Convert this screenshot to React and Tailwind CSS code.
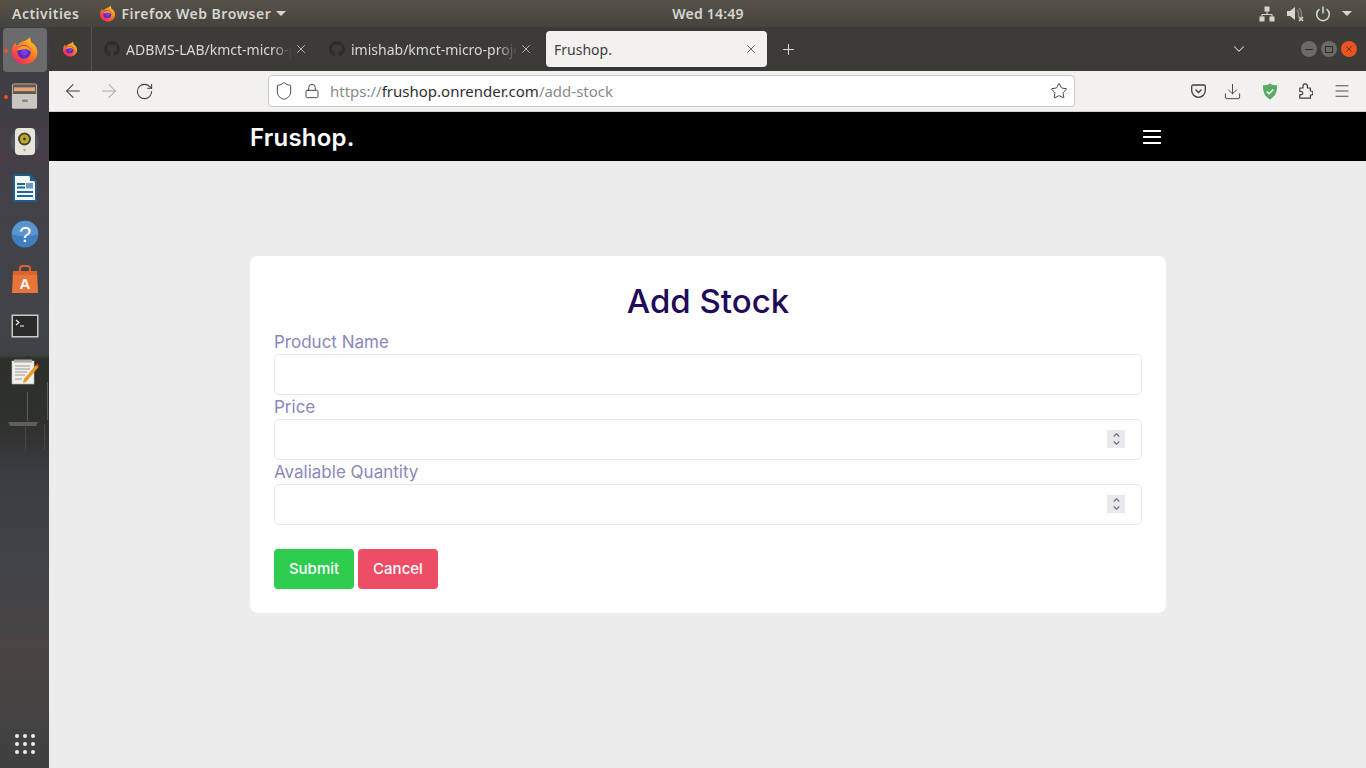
import React from "react";
import { ArrowLeft, ArrowRight, RotateCw, Shield, Lock, Star, Download, Menu, X, Plus, ChevronDown, ChevronUp } from "lucide-react";
import { FaGithub } from "react-icons/fa";

const Firefox = ({ s = 16 }) => (
  <svg width={s} height={s} viewBox="0 0 32 32">
    <defs>
      <linearGradient id="ffa" x1="0.8" y1="0.1" x2="0.2" y2="0.95">
        <stop offset="0" stopColor="#ffc21f" />
        <stop offset="0.45" stopColor="#ff7a1f" />
        <stop offset="1" stopColor="#f5236a" />
      </linearGradient>
    </defs>
    <path d="M22 1c1 3 0 5 3 7 4 3 6 7 5 12-1 7-7 11-14 11C8 31 2 25 2 17c0-4 2-8 4-10 0 2 1 3 2 4 1-2 3-4 6-5 3-1 6-2 8-5z" fill="url(#ffa)" />
    <circle cx="15.500" cy="17.500" r="7.500" fill="#5b2bc4" />
    <path d="M8 16c1-4 6-6 10-5 3 1 5 4 5 7-2-3-5-4-8-3-3 0-5 1-7 1z" fill="#ff9a1f" />
    <circle cx="16" cy="18" r="3.500" fill="#7b3fe0" />
  </svg>
);

const Spinner = () => (
  <div className="absolute right-[17px] top-[11px] w-[18px] h-[18px] bg-[#e9e9ed] flex flex-col items-center justify-center text-[#6f6f82]">
    <ChevronUp size={11} strokeWidth={2.6} className="-mb-[1px]" />
    <ChevronDown size={11} strokeWidth={2.6} className="-mt-[1px]" />
  </div>
);

const Field = ({ label, spin }) => (
  <div className="flex flex-col">
    <label className="text-[17px] leading-[24px] h-6 text-[#8b87bd]">{label}</label>
    <div className="relative">
      <input className="block w-full h-[41px] bg-white border border-[#e8e8ec] rounded-[5px]" />
      {spin && <Spinner />}
    </div>
  </div>
);

const Tab = ({ title }) => (
  <div className="w-[225px] h-full flex items-center pl-3 pr-[9px] shrink-0">
    <FaGithub size={16} className="text-[#2b2b2b] shrink-0" />
    <span className="ml-[6px] flex-1 min-w-0 text-[14px] text-[#d8d8d4] whitespace-nowrap overflow-hidden [mask-image:linear-gradient(to_right,black_88%,transparent)]">{title}</span>
    <X size={14} strokeWidth={1.3} className="ml-[2px] text-[#dcdcd8] shrink-0" />
  </div>
);

const DockItem = ({ children, active, dot }) => (
  <div className={`relative w-[44px] h-[44px] flex items-center justify-center rounded-[4px] ${active ? "bg-[#6b6b6e]" : ""}`}>
    {dot && <span className="absolute left-[1px] top-[21px] w-[4px] h-[4px] rounded-full bg-[#e95420]" />}
    {children}
  </div>
);

export default function App() {
  return (
    <div className="h-screen w-full flex flex-col overflow-hidden bg-[#ececec] font-['Noto_Sans',sans-serif]">
      {/* GNOME top bar */}
      <div className="h-[27px] shrink-0 flex items-center justify-between pl-3 pr-[14px] bg-gradient-to-b from-[#57534b] to-[#45433d] text-[#d6d6d0] text-[14px] font-semibold">
        <div className="flex items-center flex-1 tracking-[0.5px]">
          <span>Activities</span>
          <span className="ml-5"><Firefox s={17} /></span>
          <span className="ml-[5px]">Firefox Web Browser</span>
          <span className="ml-[5px] w-0 h-0 border-x-[5px] border-x-transparent border-t-[5px] border-t-[#d6d6d0]" />
        </div>
        <span className="ml-[52px] tracking-[0.2px]">Wed 14:49</span>
        <div className="flex items-center justify-end flex-1">
          <svg width="16" height="16" viewBox="0 0 16 16" fill="#d6d6d0">
            <rect x="5.500" y="0.500" width="5" height="5" />
            <rect x="0.500" y="10.500" width="5" height="5" />
            <rect x="10.500" y="10.500" width="5" height="5" />
            <path d="M7.500 5h1v3h5v3h-1V9H3.500v2h-1V8h5z" />
          </svg>
          <svg className="ml-[12px]" width="18" height="16" viewBox="0 0 18 16" fill="none">
            <path d="M0 5h3l5-4v13l-5-4H0z" fill="#d6d6d0" />
            <path d="M10 4c2 2 2 5 1 7M12 2c3 3 3 7 2 9" stroke="#8a8a84" strokeWidth="1.300" />
            <path d="M12 11l4 4m0-4l-4 4" stroke="#d6d6d0" strokeWidth="1.600" />
          </svg>
          <svg className="ml-[10px]" width="16" height="16" viewBox="0 0 16 16" fill="none" stroke="#d6d6d0" strokeWidth="1.600">
            <path d="M4.500 3.200a6.300 6.300 0 1 0 7 0" />
            <path d="M8 0.500v7" />
          </svg>
          <span className="ml-[11px] w-0 h-0 border-x-[5px] border-x-transparent border-t-[5px] border-t-[#d6d6d0]" />
        </div>
      </div>

      <div className="flex-1 flex min-h-0">
        {/* Dock */}
        <div className="w-[49px] shrink-0 relative flex flex-col items-center gap-[2px] pt-px bg-[linear-gradient(to_bottom,#3d3c40_0px,#453f47_120px,#404449_300px,#3e4245_328px,#2c3029_332px,#2f312c_395px,#333434_415px,#3a3d40_443px,#3f4347_520px,#4a4545_620px,#404040_741px)]">
          <svg className="absolute left-0 top-[325px]" width="49" height="120" viewBox="0 0 49 120">
            <path d="M0 10L12 6l8 1 8-3 8 3 13 1v12H0z" fill="#2c3029" />
            <path d="M27.500 40v29M47.500 30v38" stroke="#5c5e58" strokeWidth="1" />
            <path d="M8 70h30l-2 4H10z" fill="#5f605a" />
            <path d="M25.500 75v24M44.500 72v26" stroke="#474842" strokeWidth="1" />
          </svg>
          <DockItem active dot><Firefox s={29} /></DockItem>
          <DockItem dot>
            <svg width="27" height="28" viewBox="0 0 28 28">
              <rect x="1" y="1" width="26" height="26" rx="2" fill="#b9b7b1" />
              <rect x="2" y="2" width="24" height="11" fill="#5d5a55" />
              <rect x="3" y="5" width="22" height="4" fill="#e9a272" />
              <rect x="1" y="12" width="26" height="15" rx="1" fill="#c8c6c1" />
              <rect x="11" y="17" width="7" height="4" rx="1" fill="#8a8883" stroke="#eee" strokeWidth="0.600" />
            </svg>
          </DockItem>
          <DockItem>
            <svg width="30" height="30" viewBox="0 0 30 30">
              <circle cx="15" cy="15" r="14" fill="#5a6680" opacity="0.500" />
              <rect x="5" y="1" width="20" height="27" rx="4" fill="#e6e5dc" />
              <circle cx="14.500" cy="12" r="6.500" fill="#4a4632" />
              <circle cx="14.500" cy="12" r="4.500" fill="#c2a92a" />
              <circle cx="14.500" cy="12" r="1.400" fill="#3a3726" />
              <circle cx="14.500" cy="23" r="1.200" fill="#a9a89f" />
            </svg>
          </DockItem>
          <DockItem>
            <svg width="26" height="30" viewBox="0 0 26 30">
              <path d="M1 1h17l7 7v21H1z" fill="#1d5d8a" />
              <path d="M3 3h14l6 6v18H3z" fill="#f4f6f7" />
              <path d="M18 1l7 7h-7z" fill="#1d5d8a" />
              <rect x="5" y="10" width="8" height="2" fill="#1d6a9a" />
              <rect x="5" y="13.500" width="8" height="2" fill="#1d6a9a" />
              <rect x="14" y="10" width="7" height="5.500" fill="#6a9abb" />
              <rect x="5" y="18" width="16" height="2" fill="#1d6a9a" />
              <rect x="5" y="22" width="16" height="2" fill="#1d6a9a" />
            </svg>
          </DockItem>
          <DockItem>
            <svg width="28" height="28" viewBox="0 0 28 28">
              <circle cx="14" cy="14" r="13.500" fill="#3f7fbf" />
              <path d="M1 14a13 13 0 0 1 26 0c-6 3-20 3-26 0z" fill="#5a94cc" />
              <text x="14" y="22" textAnchor="middle" fontSize="22" fontWeight="400" fill="#fff" fontFamily="Liberation Sans, sans-serif">?</text>
            </svg>
          </DockItem>
          <DockItem>
            <svg width="28" height="30" viewBox="0 0 28 30">
              <path d="M9 6V3.500C9 2 10 1 11.500 1h5C18 1 19 2 19 3.500V6" fill="none" stroke="#d9652a" strokeWidth="2" />
              <path d="M2 6h24l1 22H1z" fill="#e8743a" />
              <path d="M2 6h24v4H2z" fill="#d9652a" />
              <text x="14" y="24" textAnchor="middle" fontSize="15" fontWeight="700" fill="#fff" fontFamily="Liberation Sans, sans-serif">A</text>
            </svg>
          </DockItem>
          <DockItem>
            <svg width="28" height="24" viewBox="0 0 28 24">
              <rect x="0.500" y="0.500" width="27" height="23" fill="#c9c9c6" />
              <rect x="2" y="2" width="24" height="20" fill="#2a2a2a" />
              <path d="M5 6l3 2.500L5 11" fill="none" stroke="#eee" strokeWidth="1.100" />
              <path d="M9 12h4" stroke="#eee" strokeWidth="1.100" />
            </svg>
          </DockItem>
          <DockItem>
            <svg width="28" height="26" viewBox="0 0 28 26">
              <rect x="1" y="2" width="22" height="23" fill="#f0efe9" stroke="#bbb" strokeWidth="0.600" />
              <rect x="3" y="0.500" width="18" height="3" fill="#aaa" />
              <path d="M4 7h15M4 10h15M4 13h12M4 16h10M4 20h7" stroke="#9a9a95" strokeWidth="1" />
              <path d="M13 20L25 6l2.500 2L15 23l-3 1z" fill="#e8962a" />
              <path d="M25 6l1-1.500 2 2L27.500 8z" fill="#d8352a" />
            </svg>
          </DockItem>
          <div className="mt-auto mb-[14px] grid grid-cols-3 gap-x-[4px] gap-y-[4px]">
            {Array.from({ length: 9 }).map((_, i) => (
              <span key={i} className="w-[4px] h-[4px] rounded-full bg-[#eeeeee]" />
            ))}
          </div>
        </div>

        {/* Browser */}
        <div className="flex-1 flex flex-col min-w-0">
          {/* Tab strip */}
          <div className="h-[44px] shrink-0 bg-[#3c3b37] flex items-center relative">
            <div className="w-[43px] h-full flex items-center justify-center border-r border-[#55544f] shrink-0">
              <Firefox s={16} />
            </div>
            <Tab title="ADBMS-LAB/kmct-micro-project" />
            <Tab title="imishab/kmct-micro-project" />
            <div className="ml-[4px] w-[221px] h-[36px] bg-[#f2f1ef] rounded-[4px] flex items-center justify-between pl-2 pr-[9px] shrink-0 shadow-sm">
              <span className="text-[14px] text-[#3d3d3d]">Frushop.</span>
              <X size={14} strokeWidth={1.3} className="text-[#3d3d3d]" />
            </div>
            <Plus size={17} strokeWidth={1.4} className="ml-[13px] text-[#dcdcd8]" />
            <ChevronDown size={18} strokeWidth={1.4} className="ml-[433px] text-[#dcdcd8]" />
            <div className="ml-auto mr-[9px] flex items-center gap-[4px]">
              <span className="w-4 h-4 rounded-full bg-[#6b6a66] flex items-center justify-center">
                <span className="w-2 h-px bg-[#2c2b28]" />
              </span>
              <span className="w-4 h-4 rounded-full bg-[#6b6a66] flex items-center justify-center">
                <span className="w-2 h-[7px] border border-[#2c2b28]" />
              </span>
              <span className="w-4 h-4 rounded-full bg-[#e95420] flex items-center justify-center">
                <X size={10} strokeWidth={1.6} className="text-[#3a2015]" />
              </span>
            </div>
          </div>

          {/* Toolbar */}
          <div className="h-[41px] shrink-0 bg-[#f2f1ef] border-b border-[#cfcfcd] flex items-center relative">
            <ArrowLeft size={22} strokeWidth={1.15} className="ml-[13px] text-[#3d3d3d]" />
            <ArrowRight size={22} strokeWidth={1.15} className="ml-[14px] text-[#a9a9a7]" />
            <RotateCw size={19} strokeWidth={1.3} className="ml-[15px] text-[#3d3d3d]" />
            <div className="ml-[114px] w-[807px] h-[32px] bg-white border border-[#c9c9c7] rounded-[4px] flex items-center pl-[5px] pr-[6px] shrink-0">
              <Shield size={20} strokeWidth={1.15} className="text-[#3d3d3d]" />
              <Lock size={16} strokeWidth={1.4} className="ml-[10px] text-[#3d3d3d]" />
              <span className="ml-[10px] text-[15px] whitespace-nowrap text-[#8a8a8a]">
                https://<span className="text-[#2e2e33]">frushop.onrender.com</span>/add-stock
              </span>
              <Star size={18} strokeWidth={1.3} className="ml-auto text-[#3d3d3d]" />
            </div>
            <div className="ml-auto mr-[6px] flex items-center text-[#3d3d3d]">
              <span className="w-9 flex justify-center">
                <svg width="15" height="14" viewBox="0 0 15 14" fill="none" stroke="#3d3d3d" strokeWidth="1.300">
                  <path d="M2 1h11c.6 0 1.300.6 1.300 1.300V6.500a6.800 6.800 0 0 1-13.600 0V2.300C.7 1.600 1.300 1 2 1z" />
                  <path d="M4.500 5.500l3 3 3-3" />
                </svg>
              </span>
              <span className="w-9 flex justify-center pr-[3px]"><Download size={19} strokeWidth={1.15} /></span>
              <span className="w-9 flex justify-center">
                <svg width="16" height="17" viewBox="0 0 16 18">
                  <path d="M8 0.500c2 1.500 4.500 2 7.500 2 0 6-1 11.500-7.500 15C1.500 14 .5 8.500.5 2.500c3 0 5.500-.5 7.500-2z" fill="#5aaa63" />
                  <path d="M4.500 9l2.500 2.500 4.500-4.500" fill="none" stroke="#fff" strokeWidth="1.500" />
                </svg>
              </span>
              <span className="w-9 flex justify-center">
                <svg width="14" height="16" viewBox="0 0 14 16" fill="none" stroke="#3d3d3d" strokeWidth="1.200" strokeLinejoin="round">
                  <path d="M.8 5H4V3a2.200 2.200 0 0 1 4.400 0v2h3v3h.5a2.100 2.100 0 0 1 0 4.200h-.5v3H.8v-3.500h1.400a1.500 1.500 0 0 0 0-3.200H.8z" />
                </svg>
              </span>
              <span className="w-9 flex justify-center"><Menu size={18} strokeWidth={1.2} /></span>
            </div>
          </div>

          {/* Web page */}
          <div className="flex-1 min-h-0 flex flex-col font-['Inter',sans-serif]">
            <div className="h-[49px] shrink-0 bg-black">
              <div className="w-[916px] ml-[201px] h-full flex items-center justify-between">
                <span className="text-white text-[24px] font-semibold tracking-[0.2px] mt-[2px]">Frushop.</span>
                <svg width="18" height="14" viewBox="0 0 18 14" className="mr-[5px]" fill="#fff">
                  <rect x="0" y="0" width="18" height="2" rx="0.500" />
                  <rect x="0" y="6" width="18" height="2" rx="0.500" />
                  <rect x="0" y="12" width="18" height="2" rx="0.500" />
                </svg>
              </div>
            </div>
            <div className="flex-1 pt-[95px] pl-[201px]">
              <div className="w-[916px] h-[357px] bg-white rounded-[8px] p-6">
                <h1 className="text-center text-[33px] leading-[42px] font-medium text-[#1f0a5c]">Add Stock</h1>
                <div className="flex flex-col mt-2">
                  <Field label="Product Name" />
                  <Field label="Price" spin />
                  <Field label="Avaliable Quantity" spin />
                </div>
                <div className="flex gap-1 mt-6">
                  <button className="w-20 h-10 rounded-[4px] bg-[#2ecc4f] text-white text-[15px] font-medium">Submit</button>
                  <button className="w-20 h-10 rounded-[4px] bg-[#ee4d66] text-white text-[15px] font-medium">Cancel</button>
                </div>
              </div>
            </div>
          </div>
        </div>
      </div>
    </div>
  );
}
